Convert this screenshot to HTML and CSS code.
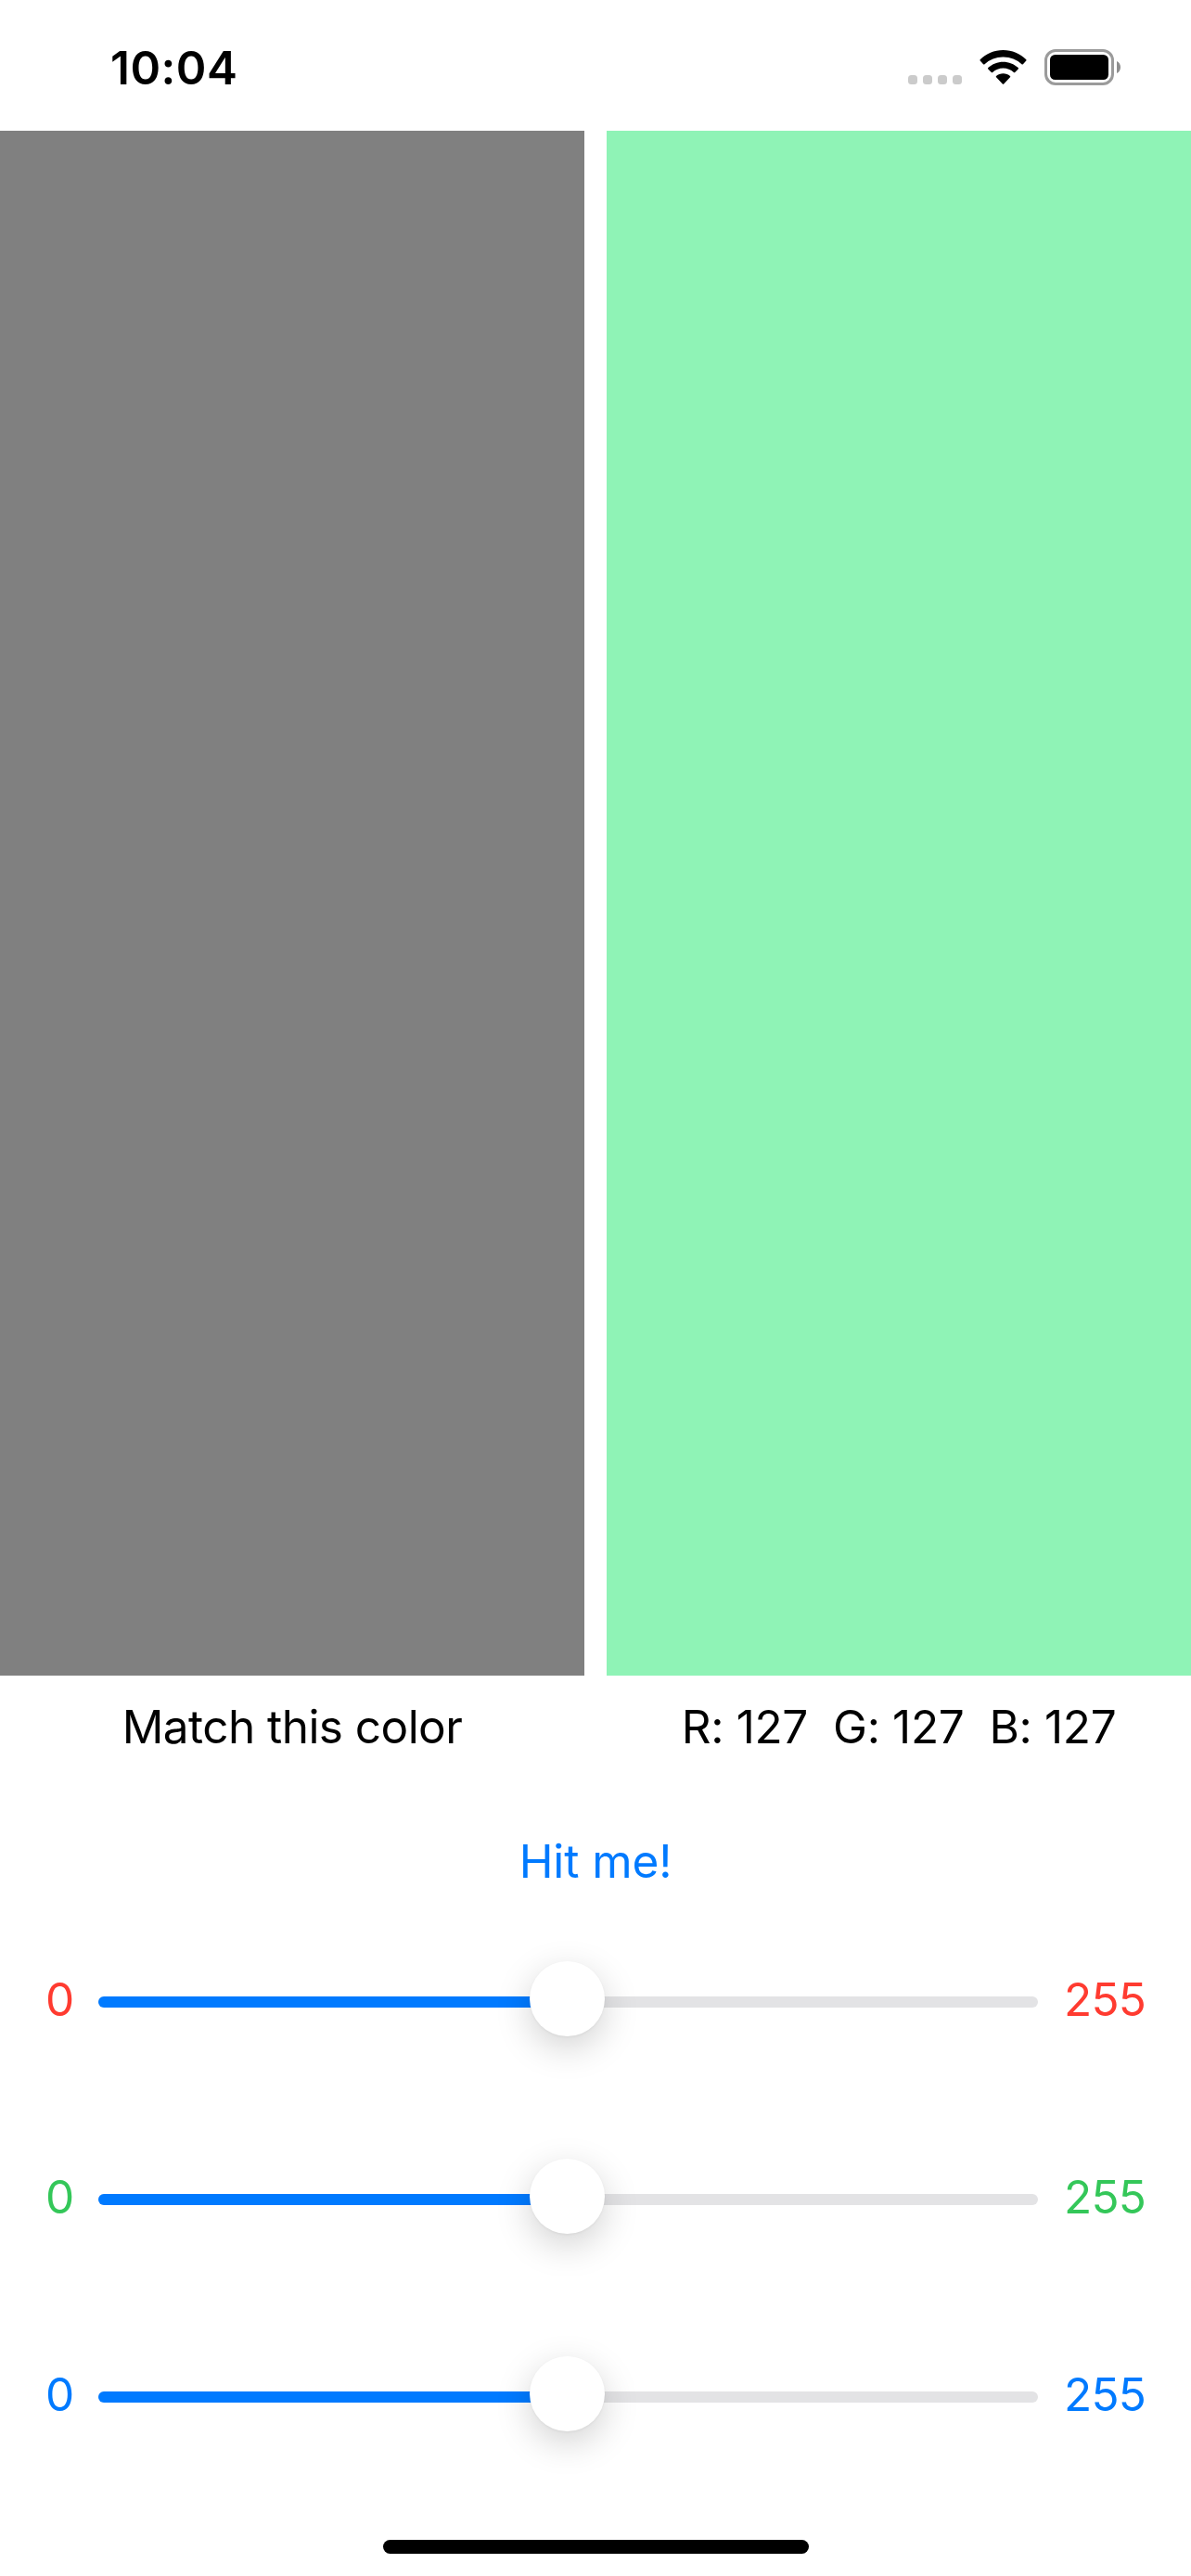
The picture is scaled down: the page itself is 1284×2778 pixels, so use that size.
FILE: index.html
```
<!DOCTYPE html>
<html lang="en">
<head>
<meta charset="utf-8">
<title>Color match</title>
<link rel="stylesheet" href="styles.css">
</head>
<body>
<div class="screen">
  <header class="status">
    <span class="time">10:04</span>
    <div class="indicators">
      <div class="cellular"><i></i><i></i><i></i><i></i></div>
      <svg class="wifi" width="51" height="38" viewBox="0 0 51 38">
        <path d="M25.5 0C16 0 7 3.8.7 10.3c-.4.4-.4.9 0 1.3l3.4 3.6c.4.4 1 .4 1.4 0A29 29 0 0 1 25.500 7.500a29 29 0 0 1 20 7.700c.4.4 1 .4 1.400 0l3.400-3.600c.4-.4.4-.9 0-1.300C44 3.800 35 0 25.500 0z"/>
        <path d="M25.500 12.700c-6.100 0-11.800 2.300-16.200 6.400-.4.400-.4.900 0 1.300l3.500 3.600c.4.400.9.400 1.300 0a16.700 16.700 0 0 1 22.800 0c.4.400.9.400 1.300 0l3.500-3.600c.4-.400.4-.900 0-1.300-4.400-4.100-10.100-6.400-16.200-6.400z"/>
        <path d="M25.500 25.300c-2.800 0-5.400.9-7.500 2.700-.4.400-.4.900 0 1.300l6.800 7.100c.4.400 1 .4 1.400 0l6.800-7.100c.4-.4.4-.9 0-1.300-2.100-1.800-4.700-2.700-7.500-2.700z"/>
      </svg>
      <svg class="battery" width="82" height="39" viewBox="0 0 82 39">
        <rect class="battery-case" x="1.500" y="1.500" width="72" height="36" rx="10.500"/>
        <rect x="6" y="6" width="63" height="27" rx="5.500"/>
        <path class="battery-cap" d="M78 13c2.500 1 4 3.600 4 6.500s-1.500 5.500-4 6.500z"/>
      </svg>
    </div>
  </header>

  <main>
    <section class="swatches">
      <figure>
        <div class="swatch guess"></div>
        <figcaption class="match-label">Match this color</figcaption>
      </figure>
      <figure>
        <div class="swatch target"></div>
        <figcaption class="rgb-label">R: 127&nbsp; G: 127&nbsp; B: 127</figcaption>
      </figure>
    </section>

    <button class="hit">Hit me!</button>

    <section class="sliders">
      <div class="slider red">
        <span class="min">0</span>
        <div class="track"><div class="fill"></div><div class="thumb"></div></div>
        <span class="max">255</span>
      </div>
      <div class="slider green">
        <span class="min">0</span>
        <div class="track"><div class="fill"></div><div class="thumb"></div></div>
        <span class="max">255</span>
      </div>
      <div class="slider blue">
        <span class="min">0</span>
        <div class="track"><div class="fill"></div><div class="thumb"></div></div>
        <span class="max">255</span>
      </div>
    </section>
  </main>
  <div class="home"></div>
</div>
</body>
</html>
```

FILE: styles.css
```
* { box-sizing: border-box; }

body {
  margin: 0;
  background: #fff;
  color: #000;
  font-family: Inter, "Liberation Sans", sans-serif;
  font-size: 49.5px;
}

.screen {
  width: 1284px;
  height: 2778px;
  display: flex;
  flex-direction: column;
  overflow: hidden;
}

.status {
  height: 141px;
  padding: 53px 76px 0 119px;
  display: flex;
  justify-content: space-between;
  align-items: flex-start;
}

.time {
  font-weight: 600;
  line-height: 40px;
  letter-spacing: 0.5px;
}

.indicators { display: flex; align-items: flex-start; }

.cellular { display: flex; gap: 6px; margin: 28px 19px 0 0; }
.cellular i { width: 10px; height: 10px; border-radius: 3.5px; background: #cbcbcb; }

.wifi { margin: 1px 19px 0 0; }
.battery-case { fill: none; stroke: #9b9b9b; stroke-width: 3; }
.battery-cap { fill: #8e8e8e; }

.swatches { display: grid; grid-template-columns: 1fr 1fr; gap: 24px; }
figure { margin: 0; }
.swatch { height: 1666px; }
.guess { background: #808080; }
.target { background: #8ff3b6; }
figcaption { line-height: 110px; text-align: center; white-space: nowrap; }
.match-label { letter-spacing: -0.55px; }
.rgb-label { letter-spacing: -0.35px; }

.hit {
  display: block;
  margin: 48px auto 0;
  padding: 0;
  border: 0;
  background: none;
  color: #007aff;
  font: inherit;
  line-height: 84px;
  letter-spacing: -0.1px;
}

.slider {
  height: 213px;
  padding: 0 48px;
  display: flex;
  align-items: center;
}
.min { width: 58px; padding-left: 1px; }
.max { width: 117px; padding-left: 28px; letter-spacing: -0.8px; }
.red { color: #ff3b30; }
.green { color: #34c759; }
.blue { color: #007aff; }

.track {
  position: relative;
  flex: 1;
  height: 12px;
  margin-top: 7px;
  border-radius: 6px;
  background: #e3e3e5;
}
.fill { width: 50%; height: 100%; border-radius: 6px 0 0 6px; background: #007aff; }
.thumb {
  position: absolute;
  left: 465px;
  top: -38px;
  width: 81px;
  height: 81px;
  border-radius: 50%;
  background: #fff;
  box-shadow: 0 1px 3px rgba(0, 0, 0, .05), 0 12px 38px rgba(0, 0, 0, .18);
}

.home {
  width: 459px;
  height: 15px;
  margin: 51px auto 0;
  border-radius: 8px;
  background: #000;
}
```
